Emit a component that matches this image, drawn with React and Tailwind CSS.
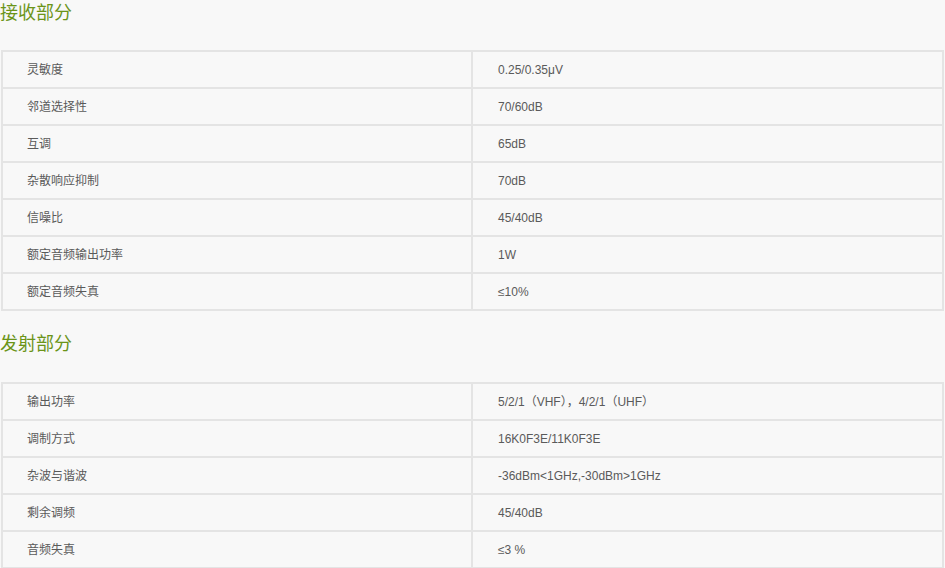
const receive = [
  ["灵敏度", "0.25/0.35μV"],
  ["邻道选择性", "70/60dB"],
  ["互调", "65dB"],
  ["杂散响应抑制", "70dB"],
  ["信噪比", "45/40dB"],
  ["额定音频输出功率", "1W"],
  ["额定音频失真", "≤10%"],
];
const transmit = [
  ["输出功率", "5/2/1（VHF），4/2/1（UHF）"],
  ["调制方式", "16K0F3E/11K0F3E"],
  ["杂波与谐波", "-36dBm<1GHz,-30dBm>1GHz"],
  ["剩余调频", "45/40dB"],
  ["音频失真", "≤3 %"],
];

const font = { fontFamily: '"Liberation Sans", Arial, "Noto Sans CJK SC", sans-serif' };

function Table({ rows }) {
  return (
    <div className="ml-px w-[943px] border-l-2 border-r-2 border-t-2 border-[#e4e4e4]">
      {rows.map(([k, v], i) => (
        <div key={i} className="flex h-[37px] border-b-2 border-[#e4e4e4] text-[12px] text-[#5a5a5a]">
          <div className="w-[470px] shrink-0 border-r-2 border-[#e4e4e4] pl-[24px] flex items-center">{k}</div>
          <div className="flex-1 pl-[25px] flex items-center">{v}</div>
        </div>
      ))}
    </div>
  );
}

export default function App() {
  return (
    <div className="w-[945px] h-[568px] overflow-hidden bg-[#f8f8f8]" style={font}>
      <h2 className="text-[18px] leading-[24px] text-[#6b9418] mb-[25px] pt-px">接收部分</h2>
      <Table rows={receive} />
      <h2 className="text-[18px] leading-[24px] text-[#6b9418] mt-[21px] mb-[26px]">发射部分</h2>
      <Table rows={transmit} />
    </div>
  );
}
